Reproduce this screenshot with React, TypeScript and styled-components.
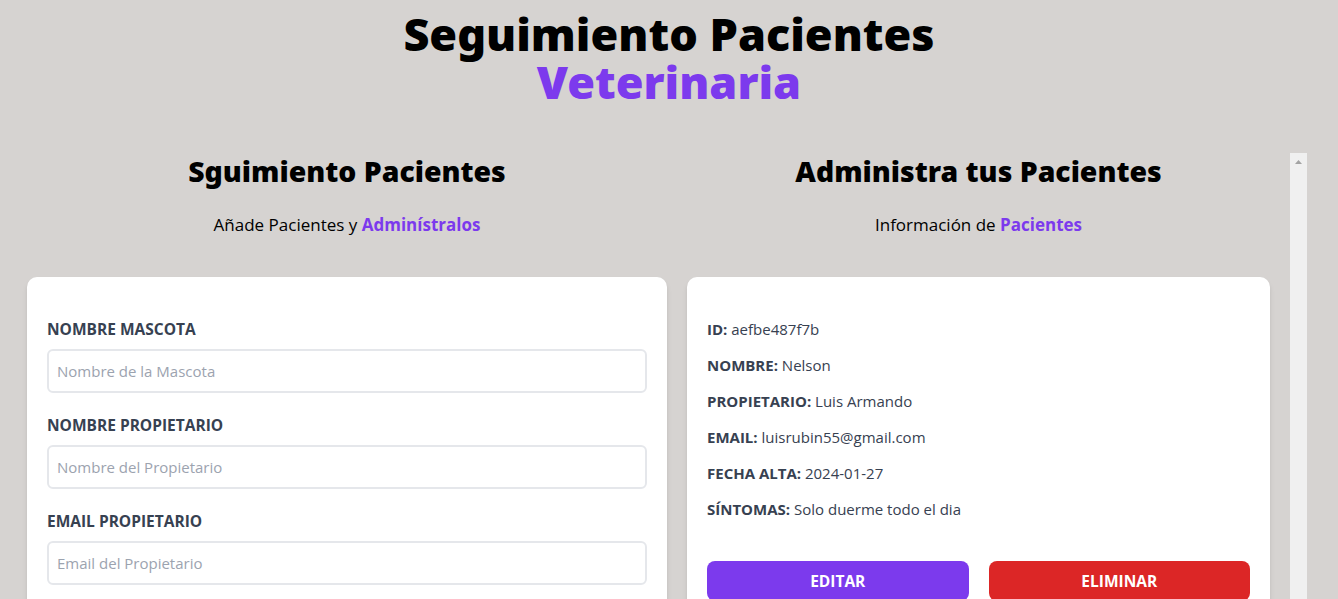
import React from "react";
import styled, { createGlobalStyle } from "styled-components";

const GlobalStyle = createGlobalStyle`
  html, body {
    margin: 0;
    padding: 0;
    overflow: hidden;
    background: #d6d3d1;
  }
  body {
    font-family: "Open Sans", "Noto Sans", sans-serif;
    color: #000;
  }
  * { box-sizing: border-box; }
`;

const Page = styled.div`
  width: 1338px;
  height: 599px;
  overflow: hidden;
  background: #d6d3d1;
`;

const Title = styled.h1`
  margin: 0;
  padding-top: 10px;
  font-family: "Noto Sans", "Open Sans", sans-serif;
  font-weight: 900;
  font-size: 45px;
  line-height: 48px;
  text-align: center;
  color: #000;
`;

const Accent = styled.span`
  display: block;
  color: #7c3aed;
`;

const Main = styled.div`
  display: flex;
  margin-top: 47px;
  padding-left: 27px;
`;

const LeftCol = styled.section`
  width: 640px;
`;

const RightCol = styled.section`
  display: flex;
  width: 640px;
  height: 599px;
`;

const RightContent = styled.div`
  flex: 1;
  padding: 0 20px;
  overflow: hidden;
`;

const ScrollTrack = styled.div`
  width: 17px;
  flex-shrink: 0;
  background: #f0f0f0;
`;

const ScrollArrow = styled.svg`
  display: block;
  width: 17px;
  height: 17px;
`;

const Heading = styled.h2`
  margin: 0;
  font-family: "Noto Sans", "Open Sans", sans-serif;
  font-weight: 900;
  font-size: 28.4px;
  line-height: 36px;
  text-align: center;
  color: #000;
`;

const Sub = styled.p`
  margin: 22px 0 38px;
  font-size: 17px;
  line-height: 28px;
  text-align: center;
  color: #000;
`;

const SubAccent = styled.span`
  color: #7c3aed;
  font-weight: 700;
`;

const Card = styled.div`
  background: #fff;
  border-radius: 10px;
  box-shadow: 0 4px 6px -1px rgba(0, 0, 0, 0.1), 0 2px 4px -2px rgba(0, 0, 0, 0.1);
  padding: 40px 20px;
`;

const Field = styled.div`
  margin-bottom: 20px;
`;

const Label = styled.label`
  display: block;
  font-size: 15.5px;
  line-height: 24px;
  font-weight: 700;
  text-transform: uppercase;
  color: #374151;
`;

const Input = styled.input`
  display: block;
  width: 100%;
  margin-top: 8px;
  padding: 8px;
  border: 2px solid #e5e7eb;
  border-radius: 6px;
  font-family: "Open Sans", "Noto Sans", sans-serif;
  font-size: 15px;
  line-height: 24px;
  color: #374151;
  background: #fff;
  outline: none;

  &::placeholder {
    color: #9ca3af;
  }
`;

const TextArea = styled.textarea`
  display: block;
  width: 100%;
  margin-top: 8px;
  padding: 8px;
  border: 2px solid #e5e7eb;
  border-radius: 6px;
  font-family: "Open Sans", "Noto Sans", sans-serif;
  font-size: 15px;
  line-height: 24px;
  resize: none;

  &::placeholder {
    color: #9ca3af;
  }
`;

const Submit = styled.button`
  width: 100%;
  padding: 12px;
  border: none;
  border-radius: 6px;
  background: #7c3aed;
  color: #fff;
  font-family: "Open Sans", "Noto Sans", sans-serif;
  font-weight: 700;
  font-size: 15px;
  text-transform: uppercase;
`;

const Info = styled.p`
  margin: 0 0 12px;
  font-size: 15px;
  line-height: 24px;
  font-weight: 700;
  text-transform: uppercase;
  color: #374151;
`;

const Value = styled.span`
  font-weight: 400;
  text-transform: none;
`;

const Actions = styled.div`
  display: flex;
  gap: 20px;
  margin-top: 40px;
`;

const ActionButton = styled.button<{ $tone: "edit" | "delete" }>`
  flex: 1;
  height: 40px;
  border: none;
  border-radius: 8px;
  background: ${(p) => (p.$tone === "edit" ? "#7c3aed" : "#dc2626")};
  color: #fff;
  font-family: "Open Sans", "Noto Sans", sans-serif;
  font-weight: 700;
  font-size: 15.5px;
  text-transform: uppercase;
`;

const fields = [
  { id: "mascota", label: "Nombre Mascota", placeholder: "Nombre de la Mascota", type: "text" },
  { id: "propietario", label: "Nombre Propietario", placeholder: "Nombre del Propietario", type: "text" },
  { id: "email", label: "Email Propietario", placeholder: "Email del Propietario", type: "email" },
  { id: "alta", label: "Alta", placeholder: "", type: "date" },
];

const patient = [
  ["ID", "aefbe487f7b"],
  ["Nombre", "Nelson"],
  ["Propietario", "Luis Armando"],
  ["Email", "luisrubin55@gmail.com"],
  ["Fecha Alta", "2024-01-27"],
  ["Síntomas", "Solo duerme todo el dia"],
];

export default function App() {
  return (
    <Page>
      <GlobalStyle />
      <Title>
        Seguimiento Pacientes <Accent>Veterinaria</Accent>
      </Title>
      <Main>
        <LeftCol>
          <Heading>Sguimiento Pacientes</Heading>
          <Sub>
            Añade Pacientes y <SubAccent>Adminístralos</SubAccent>
          </Sub>
          <Card as="form">
            {fields.map((f) => (
              <Field key={f.id}>
                <Label htmlFor={f.id}>{f.label}</Label>
                <Input id={f.id} type={f.type} placeholder={f.placeholder} />
              </Field>
            ))}
            <Field>
              <Label htmlFor="sintomas">Síntomas</Label>
              <TextArea id="sintomas" placeholder="Describe los Síntomas" />
            </Field>
            <Submit type="button">Agregar Paciente</Submit>
          </Card>
        </LeftCol>
        <RightCol>
          <RightContent>
            <Heading>Administra tus Pacientes</Heading>
            <Sub>
              Información de <SubAccent>Pacientes</SubAccent>
            </Sub>
            <Card>
              {patient.map(([k, v]) => (
                <Info key={k}>
                  {k}: <Value>{v}</Value>
                </Info>
              ))}
              <Actions>
                <ActionButton $tone="edit">Editar</ActionButton>
                <ActionButton $tone="delete">Eliminar</ActionButton>
              </Actions>
            </Card>
          </RightContent>
          <ScrollTrack aria-hidden="true">
            <ScrollArrow viewBox="0 0 17 17">
              <path d="M5 11h7L8.5 7z" fill="#a3a3a3" />
            </ScrollArrow>
          </ScrollTrack>
        </RightCol>
      </Main>
    </Page>
  );
}
